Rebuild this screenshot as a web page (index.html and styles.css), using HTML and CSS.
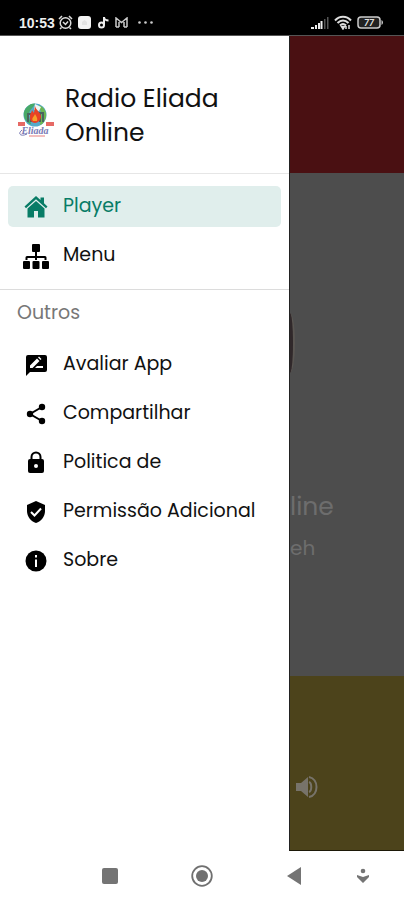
FILE: index.html
```html
<!DOCTYPE html>
<html lang="pt">
<head>
    <meta charset="utf-8">
    <meta name="viewport" content="width=device-width, initial-scale=1">
    <title>Radio Eliada Online</title>
    <link rel="stylesheet" href="styles.css">
</head>
<body>

<div class="status-bar">
    <div class="status-group">
        <span class="clock">10:53</span>
        <svg width="15" height="15" viewBox="0 0 15 15" fill="none" stroke="#ddd" stroke-width="1.5"><circle cx="7.500" cy="8" r="5.300"/><path d="M1 4l3-3M14 4l-3-3M5 7l2.500 2.500L10 6.500M3.500 12.500L2 14M11.500 12.500L13 14"/></svg>
        <svg width="13" height="13" viewBox="0 0 13 13"><rect width="13" height="13" rx="3" fill="#f4f4f4"/><path d="M4 6l2.500-2L9 6v3H4z" fill="#e4e4e4"/></svg>
        <svg class="note" width="11" height="13" viewBox="0 0 11 13" fill="none" stroke="#eee" stroke-width="2"><circle cx="3.500" cy="9" r="2.500"/><path d="M6 9V1c0 2 2 3.500 4.500 3.500"/></svg>
        <svg class="mail" width="13" height="11" viewBox="0 0 13 11" fill="none" stroke="#ccc" stroke-width="1.500"><path d="M1 10V1l5.500 4.500L12 1v9M4 10V5M9 10V5M1 10h3M9 10h3"/></svg>
        <svg class="dots" width="15" height="3" viewBox="0 0 15 3" fill="#ccc"><circle cx="1.500" cy="1.500" r="1.300"/><circle cx="7.500" cy="1.500" r="1.300"/><circle cx="13.500" cy="1.500" r="1.300"/></svg>
    </div>
    <div class="status-group">
        <svg width="18" height="12" viewBox="0 0 18 12"><path d="M0 12V10h3v2zM4 12V8h2v4zM7 12V6h2v6zM9.500 12V4h2v8z" fill="#eee"/><path d="M13 12V2h1.500v10zM16 12V0h1.500v12z" fill="#555"/></svg>
        <svg width="18" height="15" viewBox="0 0 18 15" fill="none" stroke="#ddd" stroke-width="2"><path d="M1 5.500c4.500-5 11.500-5 16 0M3.500 8c3.500-3.500 7.500-3.500 11 0M6 10.500c2-2 4-2 6 0"/><path d="M7.500 11.500L9 14l1.500-2.500zM12 11v3M15 10v4" stroke-width="1.500"/></svg>
        <svg width="27" height="13" viewBox="0 0 27 13"><rect x="1" y="1" width="22" height="11" rx="3" fill="#222" stroke="#ccc" stroke-width="1.500"/><path d="M24.500 4c2 1 2 4 0 5z" fill="#ccc"/><text x="12" y="10" class="battery-text">77</text></svg>
    </div>
</div>

<div class="screen">
    <nav class="drawer">
        <div class="drawer-header">
            <svg class="logo" width="36" height="36" viewBox="0 0 36 36">
                <circle cx="17" cy="13" r="11.500" fill="#54aacb"/>
                <path d="M6 10c2-6 7-9 11-8.500-1 4-5 5-6 10-1 4 2 7 2 11-5-2-8-7-7-12.500z" fill="#48a967"/>
                <path d="M21 3c5 2 8 7 7 12-1 4-3 7-6 8 0-5 2-8 1-12z" fill="#6bb653"/>
                <path d="M17 2l6 3-2 4-5-1z" fill="#edf6f2"/>
                <path d="M10 20V12h3v8M22 20v-9h3v9" stroke="#48655f" stroke-width="2" fill="none"/>
                <path d="M17 4c1 4 5 6 6 10 0 4-3 7-6 7s-6-3-5-7c0-3 2-4 2-6l2 3z" fill="#e84226"/>
                <path d="M17 12c1 2 3 4 2 7h-4c-2-3 1-4 2-7z" fill="#f6a12b"/>
                <path d="M0 20h7v4H0zM28 20h8v4h-8z" fill="#e66965"/>
                <text x="17" y="32" class="logo-text">Eliada</text>
                <path d="M4 28c-5 4-1 7 5 4" fill="none" stroke="#7779b5"/>
                <path d="M11 34h16" stroke="#efaaa8" stroke-width="1.500"/>
            </svg>
            <h1>Radio Eliada Online</h1>
        </div>
        <ul class="menu">
            <li><a class="menu-item active" href="#player">
                <svg width="24" height="24" viewBox="0 0 24 24" fill="currentColor"><path d="M12 1l4.500 4V2.500h3.500v5.700L23.500 11.500l-1.500 1.700L12 4.300l-10 8.900L.5 11.500z"/><path d="M12 6l8.500 7.500V22.500H14V16h-4v6.500H3.500v-9z"/></svg>
                Player</a></li>
            <li><a class="menu-item" href="#menu">
                <svg class="wide" width="26" height="26" viewBox="0 0 26 26" fill="currentColor"><rect x="9" y="1" width="8" height="8" rx="1"/><rect x="0" y="18" width="7" height="8" rx="1"/><rect x="9.500" y="18" width="7" height="8" rx="1"/><rect x="19" y="18" width="7" height="8" rx="1"/><path d="M12 9h2v4h8q1.500 0 1.500 1.500V17h-2v-2H14v2h-2v-2H4.500v2h-2v-2.500Q2.500 13 4 13h8z"/></svg>
                Menu</a></li>
        </ul>
        <h2>Outros</h2>
        <ul class="menu others">
            <li><a class="menu-item" href="#avaliar">
                <svg width="24" height="24" viewBox="0 0 24 24"><path d="M4 2h17q2 0 2 2v13q0 2-2 2H6l-4 4V4q0-2 2-2z" fill="currentColor"/><path d="M6 15v-2.500l7-7 2.500 2.500-7 7zM11 15l2-2h6v2zM14 4.500l1-1L17.500 6l-1 1z" fill="#fff"/></svg>
                Avaliar App</a></li>
            <li><a class="menu-item" href="#compartilhar">
                <svg width="24" height="24" viewBox="0 0 24 24" fill="currentColor"><path d="M18 5L6 12l12 7" fill="none" stroke="currentColor" stroke-width="2"/><circle cx="18" cy="5" r="3.200"/><circle cx="6" cy="12" r="3.200"/><circle cx="18" cy="19" r="3.200"/></svg>
                Compartilhar</a></li>
            <li><a class="menu-item" href="#politica">
                <svg width="24" height="24" viewBox="0 0 24 24"><path d="M7.500 9V6a4.500 4.500 0 0 1 9 0v3" fill="none" stroke="currentColor" stroke-width="2"/><rect x="4" y="8" width="16" height="14" rx="2" fill="currentColor"/><circle cx="12" cy="15" r="2" fill="#fff"/></svg>
                Politica de</a></li>
            <li><a class="menu-item" href="#permissao">
                <svg width="24" height="24" viewBox="0 0 24 24"><path d="M12 1l9 4v6c0 5.500-3.800 10.700-9 12-5.200-1.300-9-6.500-9-12V5z" fill="currentColor"/><path d="M7 12l3.500 3.500L17 8.500" fill="none" stroke="#fff" stroke-width="2"/></svg>
                Permissão Adicional</a></li>
            <li><a class="menu-item" href="#sobre">
                <svg width="24" height="24" viewBox="0 0 24 24"><circle cx="12" cy="12" r="10.500" fill="currentColor"/><path d="M11 6h2v2.500h-2zM11 10.500h2V18h-2z" fill="#fff"/></svg>
                Sobre</a></li>
        </ul>
    </nav>

    <main class="player">
        <div class="player-top"></div>
        <div class="player-body">
            <div class="cover"></div>
            <p class="station">line</p>
            <p class="song">eh</p>
        </div>
        <div class="player-controls">
            <button class="volume" aria-label="Volume">
                <svg width="24" height="24" viewBox="0 0 24 24"><path d="M1 8h5l7-6v20l-7-6H1z" fill="#77736a"/><path d="M14 7c3 1 3 9 0 10M14 2c10 2 10 18 0 20" fill="none" stroke="#77736a" stroke-width="2"/></svg>
            </button>
        </div>
    </main>
</div>

<div class="nav-bar">
    <button aria-label="Recentes"><svg width="16" height="16" viewBox="0 0 16 16"><rect width="16" height="16" rx="2" fill="#747474"/></svg></button>
    <button aria-label="Início"><svg width="22" height="22" viewBox="0 0 22 22"><circle cx="11" cy="11" r="9.800" fill="none" stroke="#707070" stroke-width="1.800"/><circle cx="11" cy="11" r="6" fill="#707070"/></svg></button>
    <button aria-label="Voltar"><svg width="16" height="18" viewBox="0 0 16 18"><path d="M15 0v18L1 9z" fill="#747474"/></svg></button>
    <button aria-label="Ocultar"><svg width="14" height="16" viewBox="0 0 14 16" fill="#747474"><circle cx="7" cy="3" r="2.300"/><path d="M1 7l6 2 6-2v2l-6 6-6-6z"/></svg></button>
</div>

</body>
</html>
```
FILE: styles.css
```css
* {
    box-sizing: border-box;
}
body {
    font-family: Poppins, Inter, sans-serif;
    background-color: #fff;
    color: #111;
    margin: 0;
    display: flex;
    flex-direction: column;
    min-height: 100vh;
}
h1, h2, p, ul {
    margin: 0;
    padding: 0;
    font-weight: 400;
}
ul {
    list-style: none;
}
button {
    background: none;
    border: none;
    padding: 0;
    cursor: pointer;
}
svg {
    display: block;
    flex-shrink: 0;
}
.status-bar {
    height: 36px;
    background-color: #000;
    color: #eee;
    display: flex;
    justify-content: space-between;
    padding: 10px 20px 0 19px;
    border-bottom: 1px solid #555;
}
.status-group {
    display: flex;
    align-items: center;
    gap: 5px;
}
.clock {
    font: 700 14px "Liberation Sans", sans-serif;
}
.clock + svg {
    margin-left: -2px;
}
.note {
    margin-left: 2px;
}
.mail {
    margin-left: 1px;
}
.dots {
    margin-left: 5px;
}
.battery-text {
    font: italic 700 9px Roboto, sans-serif;
    fill: #ddd;
    text-anchor: middle;
}
.screen {
    flex: 1;
    display: flex;
}
.drawer {
    width: 289px;
    flex-shrink: 0;
    background-color: #fff;
}
.drawer-header {
    height: 138px;
    display: flex;
    align-items: center;
    gap: 11px;
    padding: 24px 18px 0;
    border-bottom: 1px solid #e6e6e6;
}
.logo {
    margin-top: 6px;
}
.logo-text {
    font: italic 700 10px "Liberation Serif", serif;
    fill: #7779b5;
    text-anchor: middle;
}
h1 {
    font-size: 25px;
    line-height: 34px;
    margin-bottom: 2px;
}
h2 {
    font-size: 19px;
    line-height: 24px;
    color: #777;
    padding: 11px 17px 19px;
}
.menu {
    display: flex;
    flex-direction: column;
    gap: 8px;
    padding: 12px 8px 13px;
    border-bottom: 1px solid #dcdcdc;
}
.menu.others {
    padding-top: 0;
    border-bottom: none;
}
.menu-item {
    display: flex;
    align-items: center;
    gap: 15px;
    height: 41px;
    padding: 0 16px 2px;
    border-radius: 5px;
    color: #111;
    font-size: 19px;
    text-decoration: none;
    white-space: nowrap;
}
.menu-item svg {
    margin-top: 3px;
    color: #000;
}
.menu-item .wide {
    margin: 3px -1px 0;
}
.menu-item.active {
    background-color: #e0eeec;
    color: #087c66;
}
.menu-item.active svg {
    color: #087c66;
}
.player {
    flex: 1;
    display: flex;
    flex-direction: column;
    overflow: hidden;
    color: #6d6d6d;
    border-left: 1px solid #222;
    border-bottom: 1px solid #1c1808;
}
.player-top {
    height: 137px;
    background-color: #4a1012;
}
.player-body {
    flex: 1;
    background-color: #4d4d4d;
    padding-top: 140px;
}
.cover {
    width: 5px;
    height: 60px;
    background-color: #30282a;
    border-right: 2px solid #5a5652;
    border-radius: 0 100% 100% 0 / 0 50% 50% 0;
}
.station {
    font-size: 25px;
    line-height: 34px;
    margin-top: 117px;
}
.song {
    font-size: 20px;
    line-height: 28px;
    margin-top: 10px;
}
.player-controls {
    height: 174px;
    background-color: #4c431b;
    padding: 99px 5px 0;
}
.nav-bar {
    height: 49px;
    display: grid;
    grid-template-columns: 92fr 92fr 92fr 46fr;
    padding: 0 18px 0 64px;
}
.nav-bar button {
    display: flex;
    align-items: center;
    justify-content: center;
}
```
